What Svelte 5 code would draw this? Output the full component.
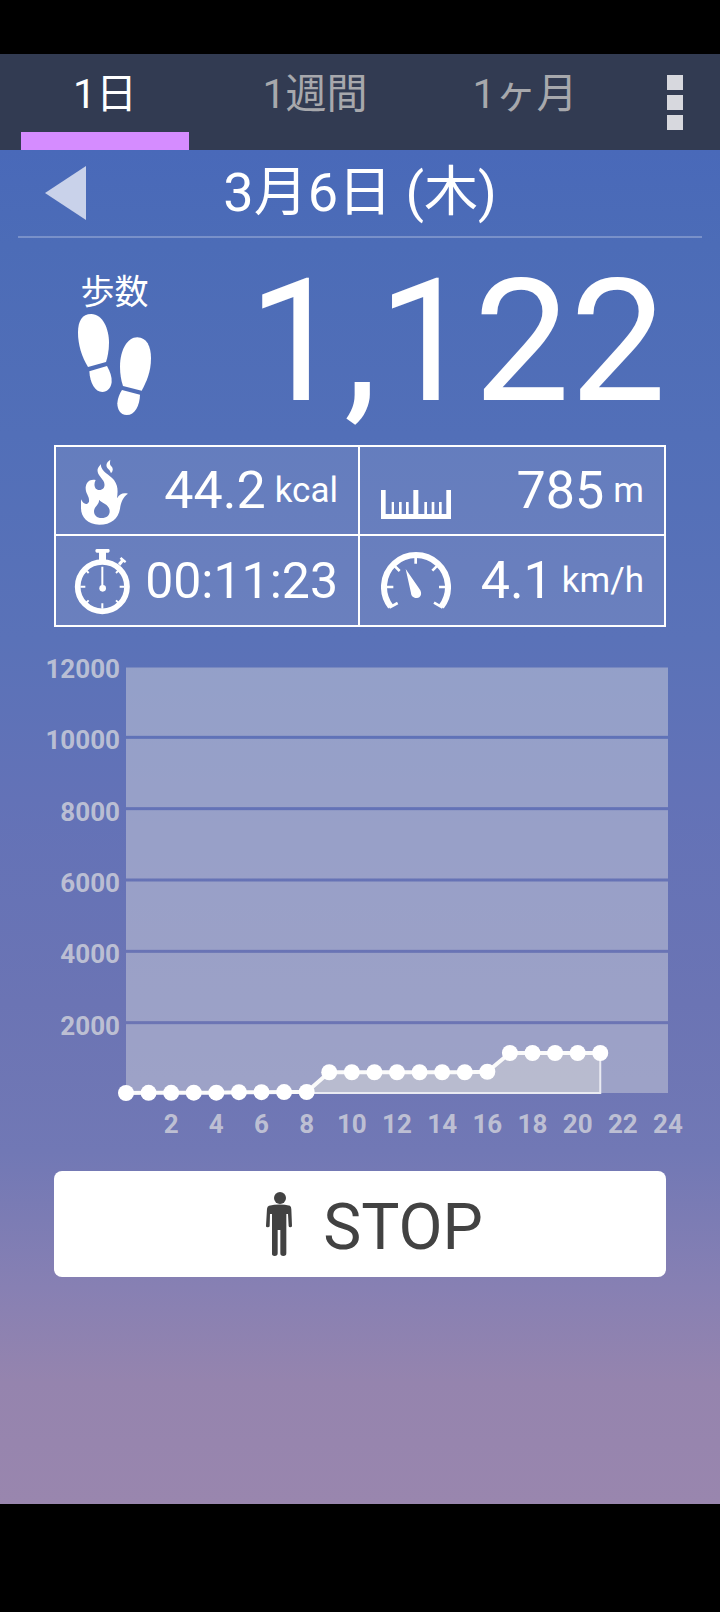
<script lang="ts">
  type Range = 'day' | 'week' | 'month';

  const tabs: { id: Range; label: string }[] = [
    { id: 'day', label: '1日' },
    { id: 'week', label: '1週間' },
    { id: 'month', label: '1ヶ月' },
  ];

  let active = $state<Range>('day');

  // Running total of steps at the end of each hour.
  const steps = [
    0, 4, 6, 8, 10, 22, 24, 26, 28, 582, 582, 582, 582, 582, 582, 582, 596,
    1122, 1122, 1122, 1122, 1122,
  ];

  const plot = { left: 126, right: 668, top: 39, bottom: 467 };
  const maxSteps = 12000;
  const yTicks = [12000, 10000, 8000, 6000, 4000, 2000];
  const xTicks = [2, 4, 6, 8, 10, 12, 14, 16, 18, 20, 22, 24];

  const x = (hour: number) => plot.left + (hour / 24) * (plot.right - plot.left);
  const y = (value: number) => plot.bottom - (value / maxSteps) * (plot.bottom - plot.top);

  // One band between each pair of grid lines, 3px apart.
  const bands = yTicks.map((tick) => {
    const top = y(tick) + 1.5;
    const bottom = tick === 2000 ? plot.bottom - 1 : y(tick - 2000) - 1.5;
    return { top, height: bottom - top };
  });

  const points = steps.map((value, hour) => ({ x: x(hour), y: y(value) - 1 }));
  const line = points.map((p) => `${p.x},${p.y}`).join(' ');
  const area = `${plot.left},${plot.bottom - 1} ${line} ${x(steps.length - 1)},${plot.bottom - 1}`;
</script>

<div class="app">
  <div class="system-bar"></div>

  <nav class="tabs">
    {#each tabs as tab (tab.id)}
      <button class="tab" class:active={active === tab.id} onclick={() => (active = tab.id)}>
        {tab.label}
      </button>
    {/each}
    <button class="more" aria-label="メニュー">
      <span></span>
      <span></span>
      <span></span>
    </button>
  </nav>

  <main>
    <header class="date">
      <button class="prev" aria-label="前の日">
        <svg viewBox="0 0 41 54" width="41" height="54"><path d="M0 27 41 0V54Z" /></svg>
      </button>
      <h1>3月6日 (木)</h1>
    </header>

    <section class="total">
      <div class="total-label">
        <span>歩数</span>
        <svg viewBox="114 192 219 303" width="73" height="101" aria-hidden="true">
          <path d="M154 192C187 192 207 235 207 278C207 300 203 321 198 336L144 351C125 320 114 283 114 248C114 213 126 192 154 192Z" />
          <path d="M148 364 201 348C210 364 216 380 215 396C213 415 201 426 187 426C165 426 150 400 148 364Z" />
          <path d="M292 262C320 262 333 290 333 325C333 365 320 395 305 422L249 408C243 390 240 370 240 350C240 300 262 262 292 262Z" />
          <path d="M246 420 300 434C299 467 285 495 260 495C240 495 232 478 232 460C233 445 239 430 246 420Z" />
        </svg>
      </div>
      <strong>1,122</strong>
    </section>

    <section class="stats">
      <div class="stat">
        <svg viewBox="84 76 210 210" aria-hidden="true">
          <path
            fill-rule="evenodd"
            d="M182 100C184 126 208 130 222 148C236 167 233 186 231 203C239 188 250 186 264 189C249 199 243 214 240 234C235 264 213 282 178 282C143 282 123 260 123 232V206C130 221 141 225 147 213C149 196 136 190 137 170C139 152 152 144 167 148C160 160 163 178 178 178C194 178 197 161 190 150C184 140 170 130 173 115C176 106 181 105 182 100ZM177 207C179 222 164 225 162 241C162 254 170 262 185 262C200 262 209 255 209 241C208 220 186 218 177 207Z"
          />
          <path d="M211 87C197 96 197 107 204 114C209 118 211 122 213 128C220 121 220 113 214 107C208 101 210 95 211 87Z" />
        </svg>
        <span class="value">44.2</span>
        <span class="unit">kcal</span>
      </div>

      <div class="stat">
        <svg viewBox="93 78 210 210" aria-hidden="true">
          <path d="M93 180H107V252H125V216H132V252H147V216H155V252H168V216H176V252H190V180H205V252H223V216H231V252H245V216H253V252H267V216H275V252H289V180H303V267H93Z" />
        </svg>
        <span class="value">785</span>
        <span class="unit">m</span>
      </div>

      <div class="stat">
        <svg viewBox="84 348 210 210" aria-hidden="true">
          <circle cx="187" cy="470" r="74" fill="none" stroke="#fff" stroke-width="17" />
          <path d="M170 357H206Q209 357 209 362T205 368H198V392H177V368H170Q166 367 166 362T170 357Z" />
          <path d="M234 400 243 390 239 386 244 381 259 394 255 399 250 396 241 407Z" />
          <path
            fill="none"
            stroke="#fff"
            stroke-width="6"
            d="M187 410V470M121 470H136M239 470H254M187 520V536M136 419 146 429M228 429 238 419M136 521 146 511M228 511 238 521"
          />
          <circle cx="188" cy="475" r="10" />
        </svg>
        <span class="value time">00:11:23</span>
      </div>

      <div class="stat">
        <svg viewBox="93 348 210 210" aria-hidden="true">
          <path
            fill="none"
            stroke="#fff"
            stroke-width="18"
            d="M122 530A96 96 0 1 1 274 530"
          />
          <path
            fill="none"
            stroke="#fff"
            stroke-width="8"
            d="M197 380V401M108 471H130M267 471H288M134 408 149 423M247 422 262 407M118 533 143 519M278 533 252 518"
          />
          <path d="M167 417 209 478C218 491 212 504 201 504C190 505 183 497 183 489Z" />
        </svg>
        <span class="value">4.1</span>
        <span class="unit">km/h</span>
      </div>
    </section>

    <svg class="chart" viewBox="0 0 720 544" role="img" aria-label="歩数">
      {#each bands as band}
        <rect
          class="plot"
          x={plot.left}
          y={band.top}
          width={plot.right - plot.left}
          height={band.height}
        />
      {/each}

      {#each yTicks as tick}
        <text x="120" y={y(tick) + 12} text-anchor="end">{tick}</text>
      {/each}
      {#each xTicks as tick}
        <text x={x(tick)} y="506" text-anchor="middle">{tick}</text>
      {/each}

      <polygon class="area" points={area} />
      <polyline class="line" points={line} />
      {#each points as point}
        <circle cx={point.x} cy={point.y} r="8" />
      {/each}
    </svg>

    <button class="stop">
      <svg viewBox="624 96 192 192" width="64" height="64" aria-hidden="true">
        <circle cx="723" cy="114" r="18" />
        <path d="M690 137Q722 130 753 137Q757 140 757 148L759 197Q759 202 754 202T749 198L747 162H742V280Q742 288 733 288T724 280V210H716V280Q716 288 707 288T699 280V162H693L692 198Q692 202 686 202T681 197L684 146Q685 138 690 137Z" />
      </svg>
      <span>STOP</span>
    </button>
  </main>

  <div class="system-bar bottom"></div>
</div>

<style>
  :global(body) {
    margin: 0;
    background: #000;
  }

  .app {
    display: flex;
    flex-direction: column;
    min-height: 100vh;
    font-family: Roboto, 'Noto Sans CJK JP', sans-serif;
    color: #fff;
  }

  button {
    margin: 0;
    padding: 0;
    border: none;
    background: none;
    font: inherit;
    color: inherit;
    cursor: pointer;
  }

  svg {
    display: block;
    flex: none;
    fill: #fff;
  }

  .system-bar {
    height: 54px;
    background: #000;
  }

  .system-bar.bottom {
    height: 108px;
  }

  .tabs {
    display: flex;
    height: 96px;
    background: #323b52;
  }

  .tab {
    flex: 7;
    box-sizing: border-box;
    margin: 0 21px;
    padding-top: 3px;
    border-bottom: 18px solid transparent;
    font-size: 41px;
    line-height: 75px;
    white-space: nowrap;
    color: #a7a8ac;
  }

  .tab.active {
    border-bottom-color: #d58cff;
    color: #fff;
  }

  .more {
    display: flex;
    flex-direction: column;
    align-items: center;
    justify-content: center;
    gap: 5px;
    width: 90px;
  }

  .more span {
    width: 16px;
    height: 15px;
    background: #d7d8de;
  }

  main {
    flex: 1;
    display: flex;
    flex-direction: column;
    background: linear-gradient(
      #4969b9 0%,
      #4c6cb7 7%,
      #526fb8 21%,
      #5a72b8 36%,
      #6372b7 48%,
      #6b74b4 63%,
      #7178b5 74%,
      #8780b3 84%,
      #9584ae 91%,
      #9986ae 100%
    );
  }

  .date {
    display: grid;
    grid-template-columns: 68px 1fr 68px;
    align-items: center;
    height: 86px;
    margin: 0 18px;
    border-bottom: 2px solid rgba(255, 255, 255, 0.25);
  }

  .prev {
    justify-self: end;
  }

  .prev svg {
    fill: #c9d2ea;
  }

  .date h1 {
    margin: 0;
    font-size: 54px;
    font-weight: 400;
    line-height: 86px;
    text-align: center;
  }

  .total {
    display: flex;
    align-items: center;
    justify-content: space-between;
    height: 207px;
    padding: 0 54px 0 78px;
  }

  .total-label {
    display: flex;
    flex-direction: column;
    align-items: center;
    gap: 2px;
    padding-top: 4px;
    font-size: 34px;
    line-height: 40px;
  }

  .total strong {
    font-size: 171px;
    font-weight: 400;
    line-height: 207px;
  }

  .stats {
    display: grid;
    grid-template-columns: repeat(2, minmax(0, 1fr));
    grid-auto-rows: 89px;
    margin: 0 54px;
    border: 2px solid #fff;
    background: rgba(211, 211, 225, 0.15);
  }

  .stat {
    display: flex;
    align-items: center;
    box-sizing: border-box;
    padding: 0 20px 0 21px;
  }

  .stat:nth-child(odd) {
    padding-left: 12px;
    border-right: 2px solid #fff;
  }

  .stat:nth-child(-n + 2) {
    border-bottom: 2px solid #fff;
  }

  .stat svg {
    width: 70px;
    height: 70px;
  }

  .value {
    margin-left: auto;
    font-size: 52px;
  }

  .value.time {
    font-size: 50px;
  }

  .unit {
    margin-left: 9px;
    font-size: 35px;
  }

  .chart {
    width: 100%;
    height: auto;
  }

  .chart text {
    font-size: 26px;
    font-weight: 700;
    fill: rgba(211, 212, 220, 0.8);
  }

  .plot {
    fill: rgba(204, 205, 218, 0.5);
  }

  .area {
    fill: rgba(211, 211, 215, 0.5);
    stroke: #e9eaf2;
    stroke-width: 2;
  }

  .line {
    fill: none;
    stroke: #fafafa;
    stroke-width: 4;
  }

  .stop {
    display: flex;
    align-items: center;
    justify-content: center;
    gap: 12px;
    height: 106px;
    margin: 0 54px;
    padding-left: 10px;
    border-radius: 8px;
    background: #fff;
    font-size: 64px;
    color: #424242;
  }

  .stop svg {
    fill: #424242;
  }

  .stop span {
    padding-top: 6px;
  }
</style>
